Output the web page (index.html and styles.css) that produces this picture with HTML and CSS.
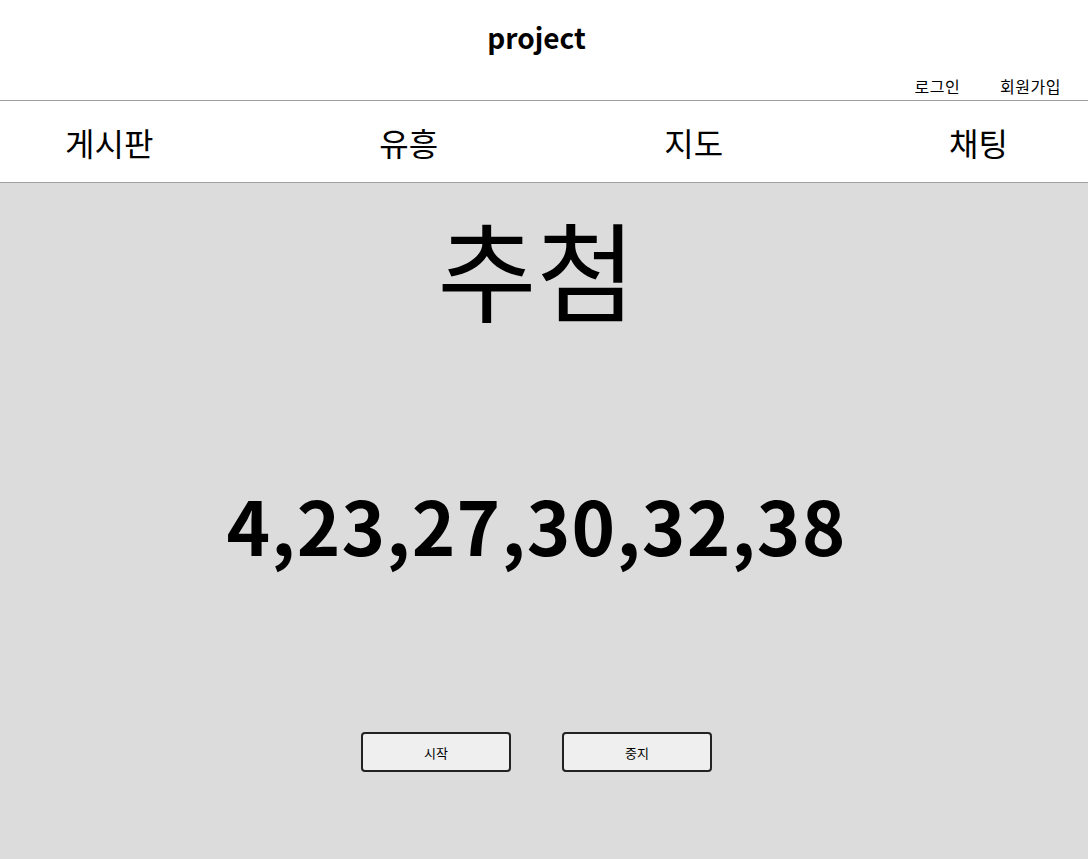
FILE: index.html
```html
<!DOCTYPE html>
<html lang="ko">
<head>
  <meta charset="UTF-8" />
  <meta name="viewport" content="width=device-width, initial-scale=1.0"/>
  <title>project</title>
  <link rel="stylesheet" href="styles.css">
</head>
<body>
  <header>
    <h1 class="site-title">project</h1>
    <div class="account">
      <a href="#">로그인</a>
      <a href="#">회원가입</a>
    </div>
  </header>

  <nav class="menu">
    <a href="#">게시판</a>
    <a href="#">유흥</a>
    <a href="#">지도</a>
    <a href="#">채팅</a>
  </nav>

  <main class="lotto">
    <h2 class="lotto-title">추첨</h2>
    <p class="lotto-numbers" id="numbers">4,23,27,30,32,38</p>
    <div class="lotto-buttons">
      <button type="button">시작</button>
      <button type="button">중지</button>
    </div>
  </main>
</body>
</html>
```

FILE: styles.css
```css
* {
  margin: 0;
  padding: 0;
  box-sizing: border-box;
  font-family: "Noto Sans CJK KR", "Noto Sans", sans-serif;
}

body {
  background: #dcdcdc;
  color: #000;
}

a {
  color: #000;
  text-decoration: none;
}

header {
  background: #fff;
  border-bottom: 1px solid #a0a0a0;
  padding-right: 15px;
}

.site-title {
  text-align: center;
  font-size: 28px;
  font-weight: 700;
  line-height: 36px;
  padding-top: 19px;
}

.account {
  display: flex;
  justify-content: flex-end;
  gap: 40px;
  padding: 21px 12px 0 0;
  height: 45px;
  font-size: 16px;
  line-height: 20px;
  letter-spacing: 0.5px;
}

.menu {
  display: flex;
  justify-content: space-between;
  align-items: center;
  height: 82px;
  padding: 0 80px 0 65px;
  background: #fff;
  border-bottom: 1px solid #a0a0a0;
  font-size: 32px;
}

.lotto {
  padding-right: 15px;
  text-align: center;
  height: 676px;
}

.lotto-title {
  font-size: 108px;
  font-weight: 400;
  line-height: 150px;
  padding-top: 9px;
}

.lotto-numbers {
  margin-top: 132px;
  font-size: 74px;
  font-weight: 700;
  line-height: 100px;
  letter-spacing: 1.2px;
}

.lotto-buttons {
  display: flex;
  justify-content: center;
  gap: 51px;
  margin-top: 158px;
}

.lotto-buttons button {
  width: 150px;
  height: 40px;
  border: 2px solid #222;
  border-radius: 4px;
  background: #efefef;
  font-size: 13px;
  color: #000;
}
```
